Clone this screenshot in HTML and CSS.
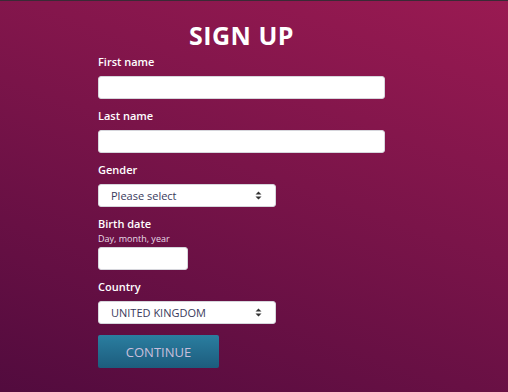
FILE: index.html
```html
<!DOCTYPE html>
<html lang="en">
<head>
<meta charset="utf-8">
<title>Sign up</title>
<link rel="stylesheet" href="styles.css">
</head>
<body>
<div class="page">
  <form class="form">
    <h1 class="title">SIGN UP</h1>
    <div class="field">
      <label class="label">First name</label>
      <input class="input wide" type="text">
    </div>
    <div class="field">
      <label class="label">Last name</label>
      <input class="input wide" type="text">
    </div>
    <div class="field">
      <label class="label">Gender</label>
      <div class="select">
        <span>Please select</span>
        <svg class="arrows" width="7" height="9" viewBox="0 0 7 9"><path d="M3.5 0.5 L6.5 3.5 H0.5 Z M3.5 8.5 L6.5 5.5 H0.5 Z" fill="#333"/></svg>
      </div>
    </div>
    <div class="field">
      <label class="label">Birth date</label>
      <span class="hint">Day, month, year</span>
      <input class="input short" type="text">
    </div>
    <div class="field">
      <label class="label">Country</label>
      <div class="select">
        <span>UNITED KINGDOM</span>
        <svg class="arrows" width="7" height="9" viewBox="0 0 7 9"><path d="M3.5 0.5 L6.5 3.5 H0.5 Z M3.5 8.5 L6.5 5.5 H0.5 Z" fill="#333"/></svg>
      </div>
    </div>
    <button class="btn" type="button">CONTINUE</button>
  </form>
</div>
</body>
</html>
```
FILE: styles.css
```css
html, body {
  margin: 0;
  height: 100%;
}
body {
  font-family: "Open Sans", "DejaVu Sans", sans-serif;
  background: linear-gradient(200deg, #9a1a52 0%, #7a1449 45%, #520b3e 100%);
  border-top: 1px solid #3a2a35;
  box-sizing: border-box;
  overflow: hidden;
}
.page {
  padding: 19px 0 0 98px;
}
.form {
  width: 287px;
  display: flex;
  flex-direction: column;
  align-items: flex-start;
}
.title {
  align-self: stretch;
  text-align: center;
  margin: 0 0 5px;
  font-size: 25px;
  line-height: 30px;
  font-weight: 700;
  color: #ffffff;
  letter-spacing: 0.5px;
}
.field {
  display: flex;
  flex-direction: column;
  align-items: flex-start;
  margin-bottom: 10px;
  align-self: stretch;
}
.label {
  font-size: 11px;
  line-height: 14px;
  font-weight: 600;
  color: #ffffff;
  margin-bottom: 7px;
}
.hint {
  font-size: 9px;
  line-height: 11px;
  color: #e8dce8;
  margin: -5px 0 3px;
}
.input {
  height: 23px;
  box-sizing: border-box;
  border: 1px solid #d6d6dc;
  border-radius: 3px;
  background: #fff;
  padding: 0 8px;
  margin: 0;
}
.wide { width: 287px; }
.short { width: 90px; }
.select {
  width: 178px;
  height: 23px;
  box-sizing: border-box;
  background: #fff;
  border: 1px solid #d6d6dc;
  border-radius: 3px;
  display: flex;
  align-items: center;
  justify-content: space-between;
  padding: 0 13px 0 12px;
  font-size: 11px;
  color: #3a3a5c;
}
.btn {
  width: 121px;
  height: 33px;
  margin-top: 1px;
  border: none;
  border-radius: 2px;
  background: linear-gradient(#2a7ea0, #1d5c7d);
  color: #c9bfdc;
  font-family: "Open Sans", "DejaVu Sans", sans-serif;
  font-size: 13px;
  padding: 0;
}
```
